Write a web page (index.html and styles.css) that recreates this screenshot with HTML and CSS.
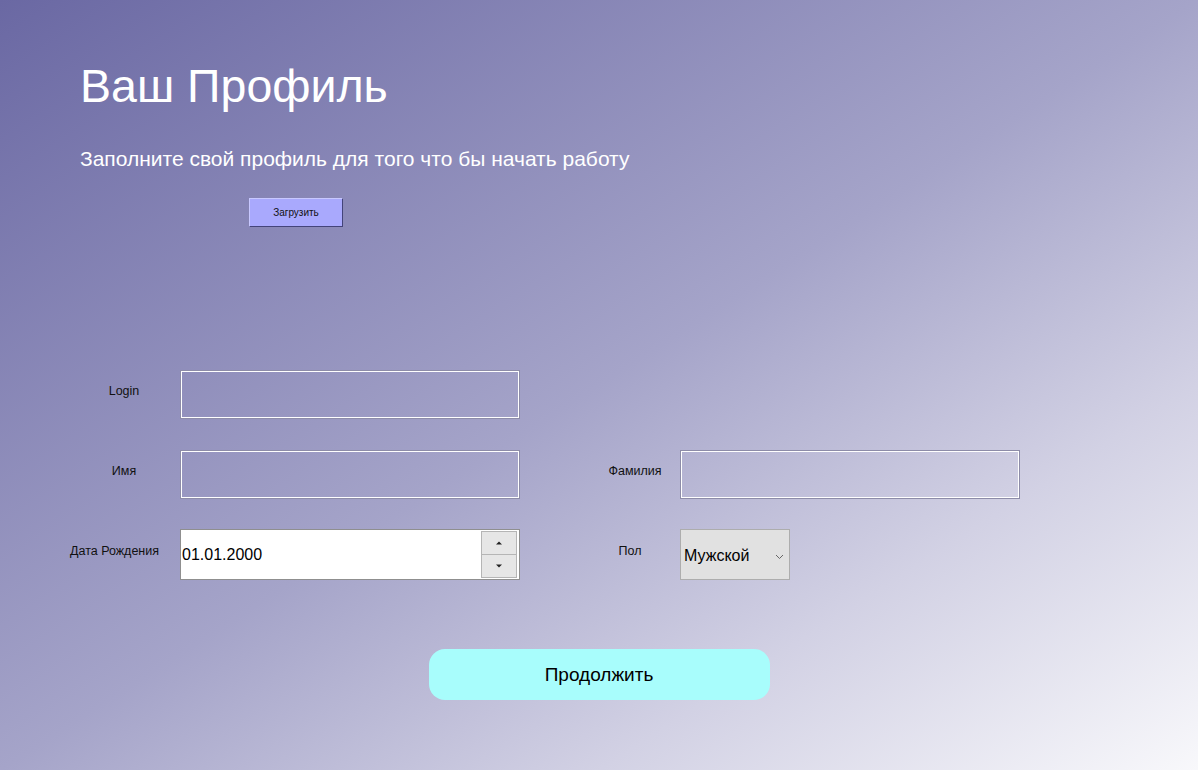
FILE: index.html
```html
<!DOCTYPE html>
<html lang="ru">
<head>
<meta charset="utf-8">
<title>Ваш Профиль</title>
<link rel="stylesheet" href="styles.css">
</head>
<body>
<div class="page">
  <header class="head">
    <h1 class="title">Ваш Профиль</h1>
    <p class="subtitle">Заполните свой профиль для того что бы начать работу</p>
    <div class="upload-row"><button class="upload" type="button">Загрузить</button></div>
  </header>

  <form class="form">
    <label class="lbl">Login</label>
    <div class="field"></div>
    <div class="spacer"></div>
    <div class="spacer"></div>
    <div class="spacer"></div>

    <label class="lbl">Имя</label>
    <div class="field"></div>
    <div class="spacer"></div>
    <label class="lbl lbl-right">Фамилия</label>
    <div class="field"></div>

    <label class="lbl lbl-date">Дата Рождения</label>
    <div class="spin">
      <span class="spin-value">01.01.2000</span>
      <span class="spin-btns">
        <span class="spin-btn"><svg width="6" height="4" viewBox="0 0 6 4"><path d="M0 3.5 L3 0.5 L6 3.5 Z" fill="#222"/></svg></span>
        <span class="spin-btn"><svg width="6" height="4" viewBox="0 0 6 4"><path d="M0 0.5 L3 3.5 L6 0.5 Z" fill="#222"/></svg></span>
      </span>
    </div>
    <div class="spacer"></div>
    <label class="lbl lbl-right lbl-pol">Пол</label>
    <div class="select-cell">
      <div class="select">
        <span>Мужской</span>
        <svg class="chev" width="9" height="6" viewBox="0 0 9 6"><path d="M1 1 L4.5 4.5 L8 1" fill="none" stroke="#666" stroke-width="1"/></svg>
      </div>
    </div>
  </form>

  <div class="actions"><button class="continue" type="button">Продолжить</button></div>
</div>
</body>
</html>
```

FILE: styles.css
```css
html, body {
  margin: 0;
  padding: 0;
  width: 1198px;
  height: 770px;
  overflow: hidden;
}
body {
  background: linear-gradient(to bottom right, #6a68a3 0%, #a5a4c9 50%, #d2d1e4 75%, #f8f8fb 100%);
  font-family: "Liberation Sans", Arial, sans-serif;
  color: #000;
}
.page {
  height: 770px;
  display: flex;
  flex-direction: column;
}
.head {
  padding-left: 80px;
  padding-top: 58px;
}
.title {
  margin: 0;
  font-weight: normal;
  font-size: 46.5px;
  line-height: 56px;
  color: #fff;
}
.subtitle {
  margin: 32px 0 0 0;
  font-size: 21px;
  line-height: 26px;
  color: #fff;
}
.upload-row {
  padding-left: 169px;
  margin-top: 26px;
}
.upload {
  display: block;
  width: 94px;
  height: 29px;
  margin: 0;
  padding: 0;
  background: #a9a9fd;
  border: 1px solid;
  border-color: #c8c8ff #44447a #44447a #c8c8ff;
  font-family: "Liberation Sans", Arial, sans-serif;
  font-size: 10px;
  color: #111;
}
.form {
  margin-top: 143px;
  margin-left: 60px;
  display: grid;
  grid-template-columns: 120px 340px 70px 90px 340px;
  grid-template-rows: 49px 49px 50px;
  row-gap: 31px;
}
.form > :nth-child(n+11) {
  margin-top: -1px;
}
.lbl {
  font-size: 12.5px;
  color: #111;
  display: flex;
  align-items: center;
  justify-content: center;
  padding-bottom: 8px;
  padding-left: 8px;
}
.lbl-date {
  justify-content: flex-start;
  padding-left: 10px;
}
.lbl-right {
  padding-left: 0;
  padding-right: 0;
}
.lbl-pol {
  padding-right: 10px;
}
.field {
  border: 1px solid #8d8ca8;
  box-shadow: inset 0 0 0 1px #fff;
}
.spin {
  background: #fff;
  border: 1px solid #8f8f8f;
  display: flex;
  align-items: center;
  justify-content: space-between;
}
.spin-value {
  font-size: 16px;
  padding-left: 1px;
}
.spin-btns {
  display: flex;
  flex-direction: column;
  gap: 1px;
  margin-right: 2px;
  border: 1px solid #b5b5b5;
  background: #b5b5b5;
}
.spin-btn {
  width: 34px;
  height: 22px;
  background: #e6e6e6;
  display: flex;
  align-items: center;
  justify-content: center;
}
.select-cell {
  display: flex;
}
.select {
  width: 110px;
  background: #e1e1e1;
  border: 1px solid #adadad;
  display: flex;
  align-items: center;
  justify-content: space-between;
  padding: 2px 5px 0 3px;
  box-sizing: border-box;
  font-size: 16px;
}
.chev {
  margin-top: 2px;
}
.actions {
  display: flex;
  justify-content: center;
  margin-top: 69px;
}
.continue {
  width: 341px;
  height: 51px;
  margin: 0;
  background: #a8fdfc;
  border: none;
  border-radius: 16px;
  font-family: "Liberation Sans", Arial, sans-serif;
  font-size: 19px;
  color: #000;
}
```
